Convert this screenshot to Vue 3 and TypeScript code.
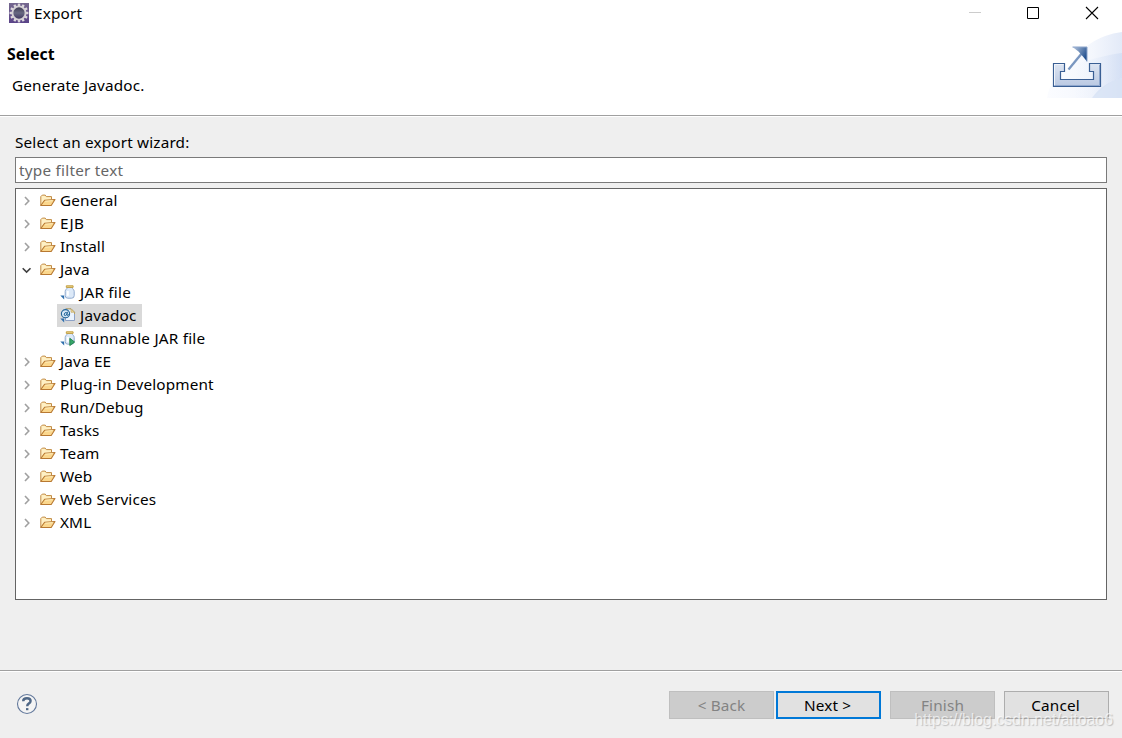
<script setup lang="ts">
interface Wizard {
  label: string
  kind: 'folder' | 'jar' | 'javadoc' | 'runnable'
  open?: boolean
  selected?: boolean
}

const rows: Wizard[] = [
  { label: 'General', kind: 'folder' },
  { label: 'EJB', kind: 'folder' },
  { label: 'Install', kind: 'folder' },
  { label: 'Java', kind: 'folder', open: true },
  { label: 'JAR file', kind: 'jar' },
  { label: 'Javadoc', kind: 'javadoc', selected: true },
  { label: 'Runnable JAR file', kind: 'runnable' },
  { label: 'Java EE', kind: 'folder' },
  { label: 'Plug-in Development', kind: 'folder' },
  { label: 'Run/Debug', kind: 'folder' },
  { label: 'Tasks', kind: 'folder' },
  { label: 'Team', kind: 'folder' },
  { label: 'Web', kind: 'folder' },
  { label: 'Web Services', kind: 'folder' },
  { label: 'XML', kind: 'folder' },
]
const teeth = Array.from({ length: 12 }, (_, i) => i * 30)
</script>

<template>
  <div class="dialog">
    <header class="head">
      <div class="titlebar">
        <svg class="logo" width="20" height="20" viewBox="0 0 20 20">
          <defs>
            <linearGradient id="lg" x1="0" y1="0" x2="0" y2="1">
              <stop offset="0" stop-color="#75688f" />
              <stop offset="1" stop-color="#5a4388" />
            </linearGradient>
            <linearGradient id="core" x1="0" y1="0" x2="0" y2="1">
              <stop offset="0" stop-color="#39364d" />
              <stop offset="0.5" stop-color="#686982" />
              <stop offset="1" stop-color="#3b315e" />
            </linearGradient>
          </defs>
          <rect width="20" height="20" fill="url(#lg)" />
          <rect v-for="a in teeth" :key="a" x="8.8" y="0.6" width="2.4" height="4" fill="#dcd8dc" :transform="`rotate(${a} 10 10)`" />
          <circle cx="10" cy="10" r="6.6" fill="url(#core)" stroke="#d4d0d4" stroke-width="1.9" />
        </svg>
        <span class="title">Export</span>
        <div class="controls">
          <svg width="14" height="14" viewBox="0 0 14 14"><path d="M1 6.5H13" stroke="#ccc" /></svg>
          <svg width="14" height="14" viewBox="0 0 14 14"><path d="M1.5 1.5H12.5V12.5H1.5Z" fill="none" stroke="#000" /></svg>
          <svg width="14" height="14" viewBox="0 0 14 14"><path d="M1 1L13 13M13 1L1 13" stroke="#000" stroke-width="1.1" /></svg>
        </div>
      </div>
      <div class="banner">
        <div class="messages">
          <h1>Select</h1>
          <p>Generate Javadoc.</p>
        </div>
        <svg class="art" width="75" height="66" viewBox="0 0 75 66">
          <defs>
            <linearGradient id="bg1"><stop offset="0" stop-color="#fbfcff" /><stop offset="0.6" stop-color="#f4f7fd" /><stop offset="1" stop-color="#e3eaf8" /></linearGradient>
            <linearGradient id="bg2"><stop offset="0" stop-color="#f5f8fe" stop-opacity="0.2" /><stop offset="1" stop-color="#cbd9f2" stop-opacity="0.6" /></linearGradient>
            <linearGradient id="tray" x1="0" y1="0" x2="0" y2="1"><stop offset="0" stop-color="#dde5f2" /><stop offset="1" stop-color="#b9c8e2" /></linearGradient>
            <linearGradient id="arrow" x1="0" y1="0" x2="1" y2="0.6"><stop offset="0" stop-color="#bac9e0" /><stop offset="1" stop-color="#214f8e" /></linearGradient>
          </defs>
          <path d="M0 66C3 50 10 42 22 36C34 15 51 3 75 0V66Z" fill="url(#bg1)" />
          <path d="M31 31C47 27 59 23 75 21V46C60 49 56 58 45 66H27Z" fill="url(#bg2)" />
          <path d="M45 66C52 56 62 49 75 46V66Z" fill="#d3dff4" opacity="0.7" />
          <path d="M6.5 31.5H17.5V39.5H13.5V47.5H46.5V39.5H42.5V31.5H53.5V54.5H6.5Z" fill="url(#tray)" stroke="#3a5f94" stroke-width="1.2" />
          <path d="M7.5 53V32.5H16.5" fill="none" stroke="#f0f4fa" stroke-width="1" />
          <path d="M8 53.5H52.5V33" fill="none" stroke="#8fa7cd" stroke-width="1" />
          <path d="M21.5 37.5L35.5 20.5" stroke="#7996c0" stroke-width="2.3" />
          <path d="M25.5 15H40V29.5L35.5 24L31.5 19.5Z" fill="url(#arrow)" />
          <path d="M25.5 15H40V29.5" fill="none" stroke="#8ca5cb" stroke-width="1" />
        </svg>
      </div>
    </header>

    <main class="content">
      <label for="filter">Select an export wizard:</label>
      <input id="filter" type="text" placeholder="type filter text" />
      <div class="tree" role="tree">
        <div v-for="row in rows" :key="row.label" class="row" :class="{ child: row.kind !== 'folder' }" role="treeitem">
          <svg v-if="row.kind === 'folder'" class="chevron" width="12" height="12" viewBox="0 0 12 12">
            <path v-if="row.open" d="M1.7 4.2L5.6 8.1L9.5 4.2" fill="none" stroke="#404040" stroke-width="1.6" />
            <path v-else d="M4 2L7.8 6L4 10" fill="none" stroke="#a0a0a0" stroke-width="1.6" />
          </svg>
          <span class="item" :class="{ selected: row.selected }">
            <svg v-if="row.kind === 'folder'" class="icon" width="16" height="16" viewBox="0 0 16 16">
              <path d="M.8 12.4V3.6L2.3 2.1H5.2L6.3 3.6H11.5V6.4" fill="#fff0c4" stroke="#c28a43" />
              <path d="M.8 12.5L4.6 7.2L15 6.5L11.2 12.5Z" fill="#fbd78d" stroke="#b87932" stroke-width="1.1" stroke-linejoin="round" />
              <path d="M5.2 8.2L12.8 7.6" stroke="#fff0bd" />
            </svg>
            <svg v-else class="icon" width="16" height="16" viewBox="0 0 16 16">
              <path d="M.3 10.6H4.2V14.5Z" fill="#2e6fad" />
              <g v-if="row.kind === 'javadoc'">
                <path d="M5.5 .8H11L14.5 4.3V12.5H5.5Z" fill="#eaf3fe" stroke="#8ca1c6" />
                <path d="M6 .8H11L14.5 4.3V6" fill="none" stroke="#bea35f" />
                <path d="M11 .8V4.3H14.5Z" fill="#ead599" stroke="#bea35f" stroke-width=".6" />
                <circle cx="5.5" cy="5.7" r="4.1" fill="#d4e7f7" stroke="#236598" stroke-width="1.1" />
                <path d="M7.5 3.8L6.8 7.2Q8.4 7.9 9.3 6M7 5.2Q6.3 3.7 4.7 5.1Q3.2 7.6 5.3 7.6Q6.5 7.2 7 5.5" fill="none" stroke="#236598" stroke-width="1" />
              </g>
              <g v-else>
                <path d="M7.2 2.5C7.2 4 5.2 4.4 5.2 6.4V10.6Q5.2 13.2 7.8 13.2H11.6Q14.2 13.2 14.2 10.6V6.4C14.2 4.4 12.2 4 12.2 2.5Z" fill="#dce9f8" stroke="#8fa9ce" />
                <path d="M7.8 6V10.8" stroke="#fff" stroke-width="2" />
                <path d="M6.3 .8H13.1V2.4H6.3Z" fill="#f0db95" stroke="#c39f42" stroke-width="1" />
                <path v-if="row.kind === 'runnable'" d="M9.8 7.3L14.6 11L9.8 14.6Z" fill="#37a66a" stroke="#208047" stroke-width=".9" />
              </g>
            </svg>
            <span class="label">{{ row.label }}</span>
          </span>
        </div>
      </div>
    </main>

    <footer class="foot">
      <svg class="help" width="22" height="22" viewBox="0 0 22 22">
        <circle cx="11" cy="11" r="9.5" fill="#f4f4f4" stroke="#62789b" stroke-width="1.1" />
        <path d="M7.2 8.2Q7.2 5.2 11 5.2Q14.6 5.2 14.6 8Q14.6 9.5 12.7 10.6Q11.2 11.5 11.2 13.3" fill="none" stroke="#506887" stroke-width="2.4" />
        <path d="M10 15.1H12.4V17.2H10Z" fill="#506887" />
      </svg>
      <div class="buttons">
        <button type="button" disabled>&lt; Back</button>
        <button type="button" class="primary">Next &gt;</button>
        <button type="button" class="finish" disabled>Finish</button>
        <button type="button" class="cancel">Cancel</button>
      </div>
      <span class="watermark">https://blog.csdn.net/aitoao6</span>
    </footer>
  </div>
</template>

<style>
body { background: #efefef; overflow: hidden; }
</style>

<style scoped>
* { box-sizing: border-box; }
.dialog {
  width: 1122px; height: 738px; display: flex; flex-direction: column;
  background: #efefef; color: #000; font-family: "Noto Sans", "Open Sans", sans-serif;
  font-size: 15.3px; line-height: 22px; letter-spacing: .16px;
}
.head { height: 116px; background: #fff; border-bottom: 1px solid #a0a0a0; flex: none; }
.titlebar { height: 32px; display: flex; align-items: flex-start; padding: 3px 23px 0 9px; }
.title { margin: -1px 0 0 5px; }
.controls { margin-left: auto; display: flex; gap: 45px; padding-top: 3px; }
.controls svg { display: block; }
.controls svg:first-child { margin-right: -1px; }
.banner { display: flex; justify-content: space-between; height: 83px; }
.messages { padding: 11px 0 0 7px; }
h1 { font-size: 15.9px; line-height: 22px; margin: 0; letter-spacing: 0; }
p { margin: 9px 0 0 5px; line-height: 22px; }
.content { height: 555px; border-top: 1px solid #fff; border-bottom: 1px solid #a0a0a0; padding: 14px 15px 0; flex: none; }
label { display: block; height: 26px; line-height: 23px; }
input {
  display: block; width: 100%; height: 26px; border: 1px solid #7a7a7a; background: #fff;
  padding: 0 3px; margin: 0 0 5px; font: inherit; letter-spacing: .24px; border-radius: 0; outline: 0;
}
input::placeholder { color: #666; opacity: 1; }
.tree { height: 412px; border: 1px solid #646464; background: #fff; }
.row { height: 23px; display: flex; align-items: center; padding-left: 5px; }
.row.child { padding-left: 41px; letter-spacing: .22px; }
.chevron { width: 12px; flex: none; }
.item { height: 23px; display: flex; align-items: center; padding: 0 4px 0 3px; white-space: nowrap; }
.row:not(.child) .item { margin-left: 4px; }
.icon { flex: none; margin-right: 4px; }
.label { line-height: 23px; }
.selected { background: #d9d9d9; width: 85px; }
.foot { position: relative; flex: 1; border-top: 1px solid #fff; display: flex; justify-content: space-between; align-items: flex-start; padding: 19px 13px 0 16px; }
.help { margin-top: 2px; }
.buttons { display: flex; }
button { width: 105px; height: 28px; padding: 0 2px 0 0; border: 1px solid #adadad; background: #e1e1e1; color: #000; font: inherit; letter-spacing: .16px; line-height: 26px; border-radius: 0; }
button:disabled { color: #838383; background: #ccc; border-color: #bfbfbf; padding: 0; }
.primary { margin-left: 2px; border: 2px solid #0078d7; line-height: 24px; }
.finish, .cancel { margin-left: 9px; }
.watermark { position: absolute; right: 9px; bottom: 8px; font: 15.9px/20px "Liberation Sans", Arial, sans-serif; letter-spacing: 0; color: rgba(255,255,255,.65); text-shadow: 1px 1px 1px rgba(120,120,120,.4); white-space: nowrap; }
</style>
